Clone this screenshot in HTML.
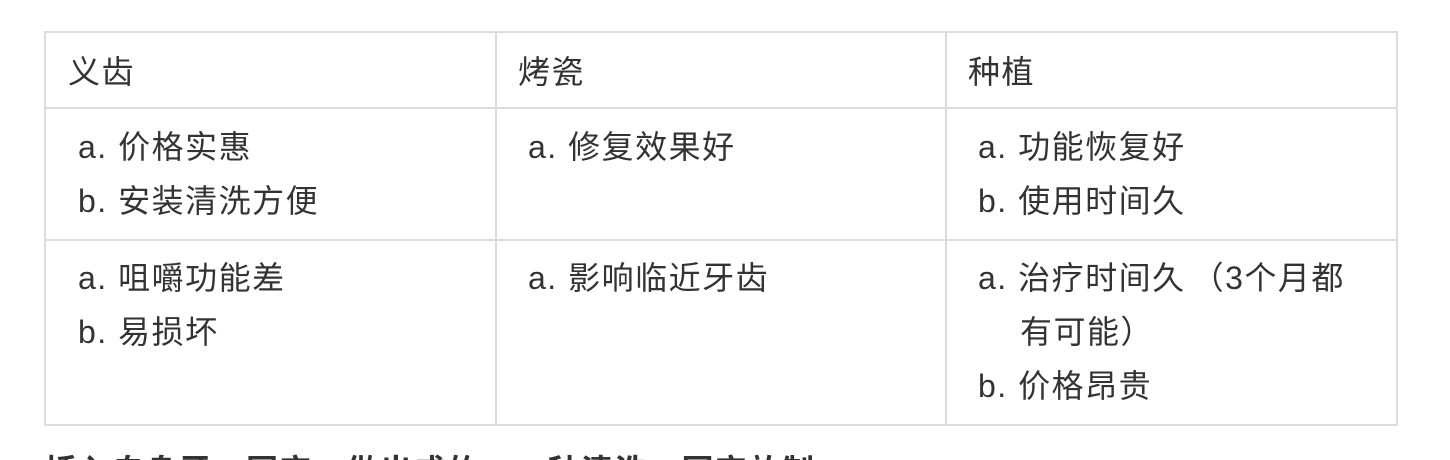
<!DOCTYPE html>
<html><head><meta charset="utf-8"><style>
html,body{margin:0;width:1450px;height:460px;overflow:hidden;background:#fff}
body{position:relative;font-family:"Liberation Sans","Noto Sans CJK SC",sans-serif;color:#333;font-size:32px;letter-spacing:1.5px}
.h{position:absolute;background:#dcdcdc;height:2px}
.v{position:absolute;background:#dcdcdc;width:2px}
.t{position:absolute;line-height:54px;white-space:nowrap}
.clip{position:absolute;left:0;top:440px;width:1450px;height:20px;overflow:hidden}
.clip .t{line-height:20px;top:21px}
</style></head><body>
<div class="h" style="left:44px;top:31px;width:1354px"></div>
<div class="h" style="left:44px;top:107px;width:1354px"></div>
<div class="h" style="left:44px;top:239px;width:1354px"></div>
<div class="h" style="left:44px;top:424px;width:1354px"></div>
<div class="v" style="left:44px;top:31px;height:395px"></div>
<div class="v" style="left:495px;top:31px;height:395px"></div>
<div class="v" style="left:945px;top:31px;height:395px"></div>
<div class="v" style="left:1396px;top:31px;height:395px"></div>

<div class="t" style="left:68px;top:45px">义齿</div>
<div class="t" style="left:518px;top:45px">烤瓷</div>
<div class="t" style="left:968px;top:45px">种植</div>

<div class="t" style="left:78px;top:120px">a. 价格实惠</div>
<div class="t" style="left:78px;top:174px">b. 安装清洗方便</div>
<div class="t" style="left:528px;top:120px">a. 修复效果好</div>
<div class="t" style="left:978px;top:120px">a. 功能恢复好</div>
<div class="t" style="left:978px;top:174px">b. 使用时间久</div>

<div class="t" style="left:78px;top:251px">a. 咀嚼功能差</div>
<div class="t" style="left:78px;top:305px">b. 易损坏</div>
<div class="t" style="left:528px;top:251px">a. 影响临近牙齿</div>
<div class="t" style="left:978px;top:251px">a. 治疗时间久<span style="margin-left:6px">（3个月都</span></div>
<div class="t" style="left:1020px;top:305px">有可能）</div>
<div class="t" style="left:978px;top:359px">b. 价格昂贵</div>

<div class="clip"><div class="t" style="left:45px;font-weight:bold">插入自身牙，固定，做出成的，一种清洗，固定放制</div></div>
</body></html>
